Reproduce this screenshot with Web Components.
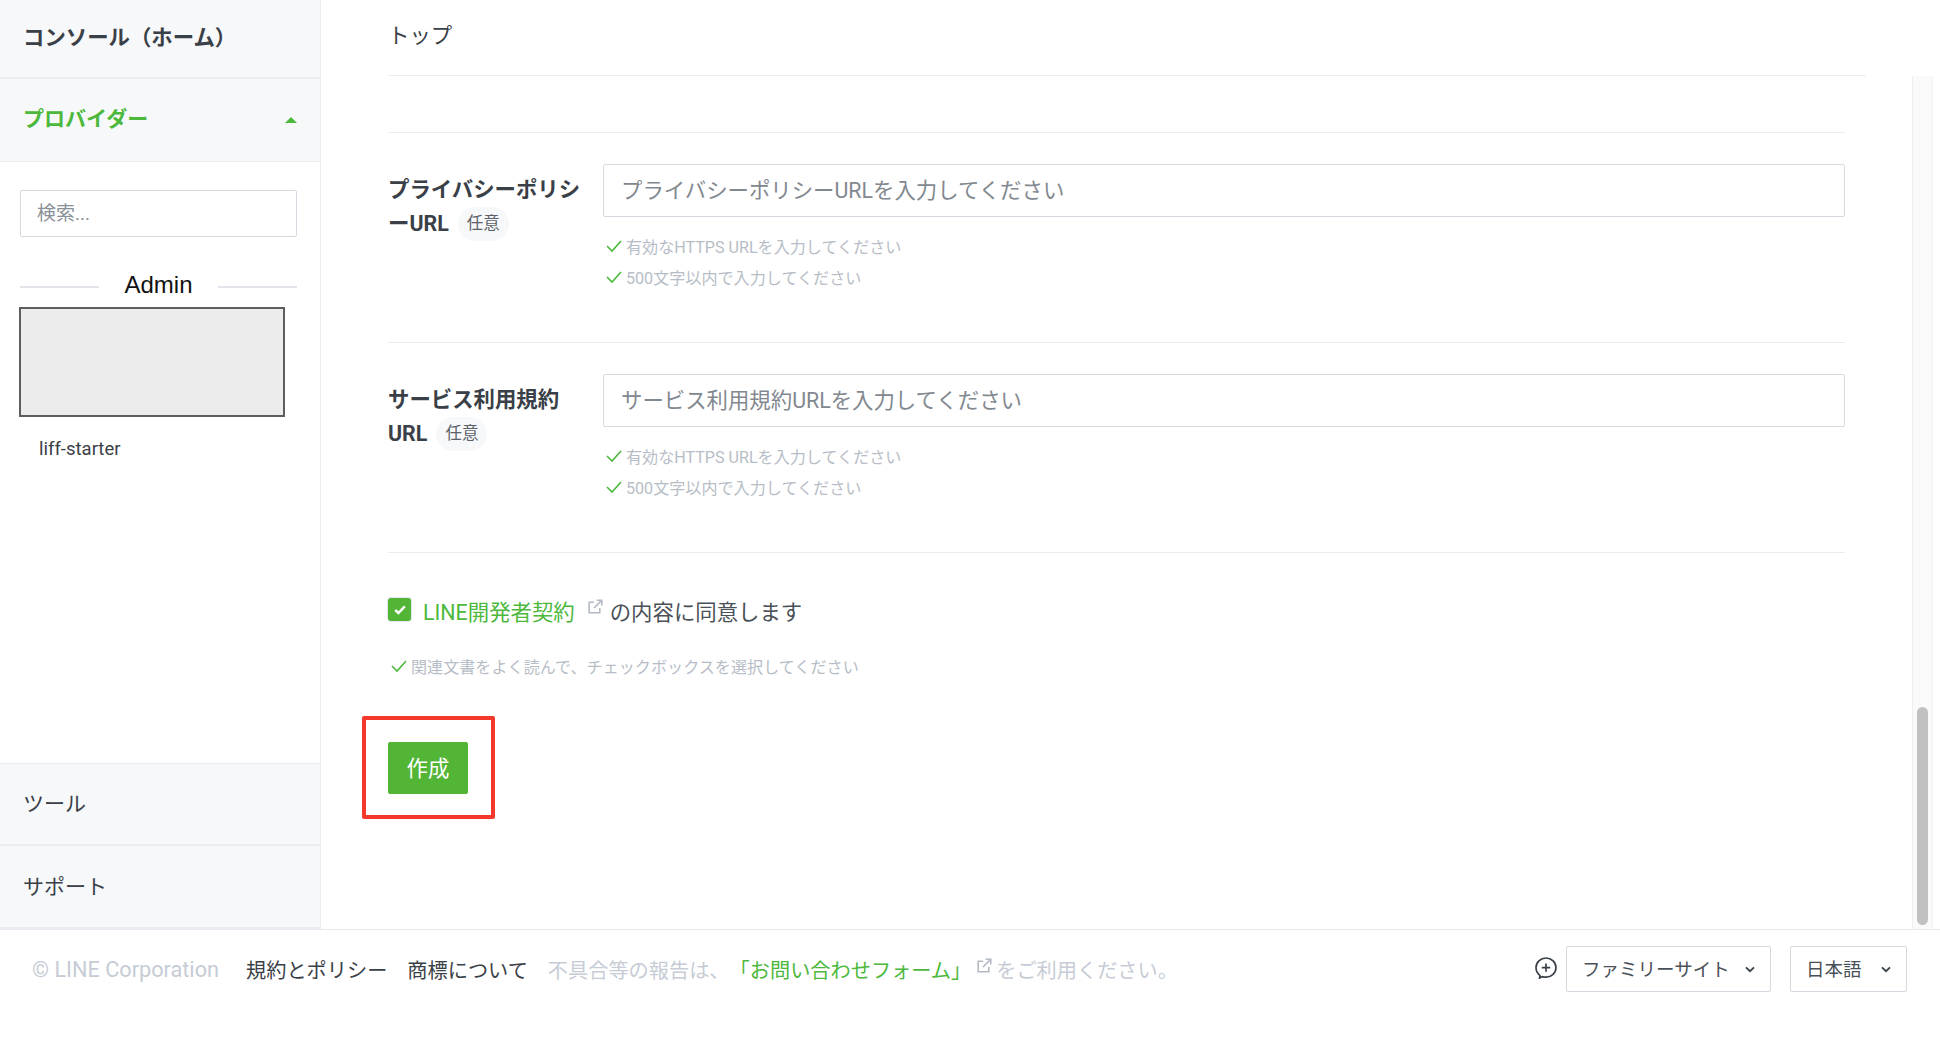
<!DOCTYPE html>
<html lang="ja">
<head>
<meta charset="utf-8">
<title>LINE Developers</title>
<style>
    html, body{
        margin: 0;
        height: 100%;
        background: #FFFFFF;
        overflow: hidden;
    }
    body{
        font-family: "Roboto", "Noto Sans CJK JP", sans-serif;
        color: #3A4047;
    }
</style>
</head>
<body>
<console-app>
    <side-nav slot="side"></side-nav>
    <page-top slot="top">トップ</page-top>
    <url-field slot="form" placeholder="プライバシーポリシーURLを入力してください">プライバシーポリシ<br>ーURL</url-field>
    <url-field slot="form" placeholder="サービス利用規約URLを入力してください">サービス利用規約<br>URL</url-field>
    <agree-box slot="form"></agree-box>
    <create-button slot="form">作成</create-button>
    <site-footer slot="foot"></site-footer>
</console-app>

<script>
const EXTERNAL_ICON = `
    <svg class="ext" viewBox="0 0 16 16" fill="none" stroke="currentColor" stroke-width="1.6">
        <path d="M7 3.2H2.2v10.6h10.6V9"/>
        <path d="M9.6 1.2h5.2v5.2M14.6 1.4L7 9"/>
    </svg>`;

const CHEVRON_ICON = `
    <svg class="chevron" viewBox="0 0 10 7" fill="none" stroke="currentColor" stroke-width="1.8">
        <path d="M1 1.4l4 3.8 4-3.8"/>
    </svg>`;

class ConsoleApp extends HTMLElement
{
    constructor()
    {
        super();
        this.attachShadow({mode: "open"});
    }

    getStyles()
    {
        return `
        <style>
            :host{
                display: grid;
                grid-template-rows: 929px 113px;
                height: 1042px;
            }
            .body{
                display: flex;
                min-height: 0;
            }
            .main{
                flex: 1;
                display: flex;
                flex-direction: column;
                padding: 0 46px 0 67px;
                min-width: 0;
            }
            .form{
                display: flex;
                flex-direction: column;
                padding-right: 21px;
            }
            .rail{
                width: 21px;
                margin-top: 76px;
                margin-right: 7px;
                box-sizing: border-box;
                border-left: 1px solid #ECEEF2;
                border-right: 1px solid #F2F3F5;
                background: #FAFAFA;
                display: flex;
                flex-direction: column;
                align-items: center;
            }
            .thumb{
                width: 11px;
                height: 218px;
                margin-top: auto;
                margin-bottom: 4px;
                border-radius: 6px;
                background: #C1C1C1;
            }
            footer{
                border-top: 1px solid #E6E9EF;
            }
        </style>
        `;
    }

    render()
    {
        this.shadowRoot.innerHTML = `
            ${this.getStyles()}
            <div class="body">
                <slot name="side"></slot>
                <div class="main">
                    <slot name="top"></slot>
                    <div class="form"><slot name="form"></slot></div>
                </div>
                <div class="rail"><div class="thumb"></div></div>
            </div>
            <footer><slot name="foot"></slot></footer>
        `;
    }

    connectedCallback()
    {
        this.render();
    }
}
customElements.define("console-app", ConsoleApp);

class NavItem extends HTMLElement
{
    constructor()
    {
        super();
        this.attachShadow({mode: "open"});
    }

    render()
    {
        this.shadowRoot.innerHTML = `
            <style>
                :host{
                    display: flex;
                    align-items: center;
                    justify-content: space-between;
                    box-sizing: border-box;
                    height: 83px;
                    padding: 0 23px 4px;
                    background: #F7F8FA;
                    border-bottom: 2px solid #E9ECF1;
                    font-size: 21px;
                    color: #3A4047;
                }
                :host([bold]){
                    font-weight: 700;
                    padding-bottom: 7px;
                }
                :host([active]){
                    color: #4CB83C;
                    border-bottom-width: 1px;
                }
                .caret{
                    width: 0;
                    height: 0;
                    margin-top: 7px;
                    border-left: 6px solid transparent;
                    border-right: 6px solid transparent;
                    border-bottom: 6px solid #4CB83C;
                }
            </style>
            <slot></slot>
            ${this.hasAttribute("active") ? '<span class="caret"></span>' : ""}
        `;
    }

    connectedCallback()
    {
        this.render();
    }
}
customElements.define("nav-item", NavItem);

class SideNav extends HTMLElement
{
    constructor()
    {
        super();
        this.attachShadow({mode: "open"});
    }

    render()
    {
        this.shadowRoot.innerHTML = `
            <style>
                :host{
                    display: flex;
                    flex-direction: column;
                    flex: none;
                    box-sizing: border-box;
                    width: 321px;
                    border-right: 1px solid #E9ECF1;
                }
                .home{
                    height: 79px;
                    font-size: 21.4px;
                }
                .panel{
                    flex: 1;
                    padding: 28px 23px 0 20px;
                }
                .search{
                    box-sizing: border-box;
                    height: 47px;
                    padding: 0 16px 4px;
                    display: flex;
                    align-items: center;
                    border: 1px solid #D5D9E0;
                    border-radius: 2px;
                    font-size: 19px;
                    color: #8A9098;
                }
                .group{
                    display: flex;
                    align-items: center;
                    justify-content: space-between;
                    height: 30px;
                    margin-top: 33px;
                    font-family: "Liberation Sans", sans-serif;
                    font-size: 24px;
                    color: #111111;
                }
                .group::before, .group::after{
                    content: "";
                    width: 79px;
                    height: 2px;
                    margin-top: 4px;
                    background: #E2E5EA;
                }
                .thumb{
                    box-sizing: border-box;
                    width: 266px;
                    height: 110px;
                    margin: 7px 0 20px -1px;
                    border: 2px solid #5E5E5E;
                    background: #ECECEC;
                }
                .name{
                    padding-left: 19px;
                    font-size: 18.5px;
                    line-height: 24px;
                    color: #3A4047;
                }
                nav-item.first{
                    border-top: 1px solid #E9ECF1;
                }
            </style>
            <nav-item class="home" bold>コンソール（ホーム）</nav-item>
            <nav-item active bold>プロバイダー</nav-item>
            <div class="panel">
                <div class="search">検索...</div>
                <div class="group"><span>Admin</span></div>
                <div class="thumb"></div>
                <div class="name">liff-starter</div>
            </div>
            <nav-item class="first">ツール</nav-item>
            <nav-item>サポート</nav-item>
        `;
    }

    connectedCallback()
    {
        this.render();
    }
}
customElements.define("side-nav", SideNav);

class PageTop extends HTMLElement
{
    constructor()
    {
        super();
        this.attachShadow({mode: "open"});
    }

    render()
    {
        this.shadowRoot.innerHTML = `
            <style>
                :host{
                    display: flex;
                    align-items: center;
                    box-sizing: border-box;
                    height: 76px;
                    padding-bottom: 9px;
                    border-bottom: 1px solid #E9ECF1;
                    font-size: 21.4px;
                    color: #3A4047;
                    margin-bottom: 56px;
                }
            </style>
            <slot></slot>
        `;
    }

    connectedCallback()
    {
        this.render();
    }
}
customElements.define("page-top", PageTop);

class HintLine extends HTMLElement
{
    constructor()
    {
        super();
        this.attachShadow({mode: "open"});
    }

    render()
    {
        this.shadowRoot.innerHTML = `
            <style>
                :host{
                    display: flex;
                    align-items: center;
                    gap: 4px;
                    height: 31px;
                    padding-left: 3px;
                    font-size: 16.1px;
                    color: #B7BDC6;
                }
                svg{
                    width: 16px;
                    height: 14px;
                    flex: none;
                }
            </style>
            <svg viewBox="0 0 16 14" fill="none" stroke="#4CB83C" stroke-width="1.6">
                <path d="M1 7l5 5 9-10"/>
            </svg>
            <slot></slot>
        `;
    }

    connectedCallback()
    {
        this.render();
    }
}
customElements.define("hint-line", HintLine);

class UrlField extends HTMLElement
{
    constructor()
    {
        super();
        this.attachShadow({mode: "open"});
    }

    render()
    {
        this.shadowRoot.innerHTML = `
            <style>
                :host{
                    display: grid;
                    grid-template-columns: 215px 1fr;
                    box-sizing: border-box;
                    height: 210px;
                    padding-top: 31px;
                    border-top: 1px solid #E9ECF1;
                }
                .label{
                    margin-top: 9px;
                    font-size: 21.4px;
                    line-height: 34px;
                    font-weight: 700;
                    color: #3A4047;
                }
                .tag{
                    display: inline-block;
                    box-sizing: border-box;
                    height: 34px;
                    padding: 0 9px;
                    margin-left: 9px;
                    border-radius: 17px;
                    background: #F7F8FA;
                    font-size: 16.5px;
                    line-height: 33px;
                    font-weight: 400;
                    vertical-align: top;
                    color: #5B6168;
                }
                .input{
                    box-sizing: border-box;
                    height: 53px;
                    padding: 0 17px 5px;
                    display: flex;
                    align-items: center;
                    border: 1px solid #D5D9E0;
                    border-radius: 2px;
                    font-size: 21.4px;
                    color: #82888F;
                }
                .hints{
                    margin-top: 13px;
                }
            </style>
            <div class="label"><slot></slot><span class="tag">任意</span></div>
            <div>
                <div class="input">${this.getAttribute("placeholder")}</div>
                <div class="hints">
                    <hint-line>有効なHTTPS URLを入力してください</hint-line>
                    <hint-line>500文字以内で入力してください</hint-line>
                </div>
            </div>
        `;
    }

    connectedCallback()
    {
        this.render();
    }
}
customElements.define("url-field", UrlField);

class AgreeBox extends HTMLElement
{
    constructor()
    {
        super();
        this.attachShadow({mode: "open"});
    }

    render()
    {
        this.shadowRoot.innerHTML = `
            <style>
                :host{
                    display: block;
                    box-sizing: border-box;
                    height: 190px;
                    padding-top: 42px;
                    border-top: 1px solid #E9ECF1;
                }
                .row{
                    display: flex;
                    align-items: center;
                    height: 30px;
                    font-size: 21.4px;
                    color: #4A5057;
                }
                .box{
                    box-sizing: border-box;
                    width: 23px;
                    height: 23px;
                    margin: -1px 12px 0 0;
                    border-radius: 3px;
                    background: #53B535;
                    box-shadow: 0 0 0 1px #E4E8EE;
                    display: flex;
                    align-items: center;
                    justify-content: center;
                }
                .box svg{
                    width: 12px;
                    height: 10px;
                }
                a{
                    color: #4CB83C;
                    text-decoration: none;
                }
                .ext{
                    width: 16px;
                    height: 16px;
                    margin: -6px 7px 0 12px;
                    color: #B4BAC3;
                }
                hint-line{
                    margin-top: 25px;
                    padding-left: 3px;
                }
            </style>
            <div class="row">
                <span class="box">
                    <svg viewBox="0 0 12 10" fill="none" stroke="#FFFFFF" stroke-width="2.4"><path d="M1.2 5l3.2 3L10.8 1.4"/></svg>
                </span>
                <a>LINE開発者契約</a>${EXTERNAL_ICON}<span>の内容に同意します</span>
            </div>
            <hint-line>関連文書をよく読んで、チェックボックスを選択してください</hint-line>
        `;
    }

    connectedCallback()
    {
        this.render();
    }
}
customElements.define("agree-box", AgreeBox);

class CreateButton extends HTMLElement
{
    constructor()
    {
        super();
        this.attachShadow({mode: "open"});
    }

    render()
    {
        this.shadowRoot.innerHTML = `
            <style>
                :host{
                    display: flex;
                    align-items: center;
                    justify-content: center;
                    position: relative;
                    box-sizing: border-box;
                    width: 80px;
                    height: 52px;
                    padding-bottom: 4px;
                    border-radius: 2px;
                    background: #53B535;
                    color: #FFFFFF;
                    font-size: 21.4px;
                }
                .mark{
                    position: absolute;
                    left: -26px;
                    top: -26px;
                    width: 133px;
                    height: 103px;
                    box-sizing: border-box;
                    border: 4px solid #F5382C;
                    border-radius: 2px;
                }
            </style>
            <slot></slot>
            <span class="mark"></span>
        `;
    }

    connectedCallback()
    {
        this.render();
    }
}
customElements.define("create-button", CreateButton);

class FootSelect extends HTMLElement
{
    constructor()
    {
        super();
        this.attachShadow({mode: "open"});
    }

    render()
    {
        this.shadowRoot.innerHTML = `
            <style>
                :host{
                    display: flex;
                    align-items: center;
                    justify-content: space-between;
                    box-sizing: border-box;
                    height: 46px;
                    padding: 0 15px 2px 15px;
                    border: 1px solid #D5D9E0;
                    border-radius: 2px;
                    font-size: 18.5px;
                    color: #4A5057;
                }
                .chevron{
                    width: 10px;
                    height: 7px;
                    margin-top: 2px;
                    color: #3A4047;
                }
            </style>
            <slot></slot>${CHEVRON_ICON}
        `;
    }

    connectedCallback()
    {
        this.render();
    }
}
customElements.define("foot-select", FootSelect);

class SiteFooter extends HTMLElement
{
    constructor()
    {
        super();
        this.attachShadow({mode: "open"});
    }

    render()
    {
        this.shadowRoot.innerHTML = `
            <style>
                :host{
                    display: flex;
                    align-items: center;
                    height: 46px;
                    padding: 16px 33px 0 32px;
                    font-size: 20.2px;
                    color: #C6CCD5;
                }
                .copy{
                    font-size: 21.7px;
                }
                .dark{
                    color: #3A4047;
                }
                a{
                    color: #4CB83C;
                    text-decoration: none;
                }
                .ext{
                    width: 16px;
                    height: 16px;
                    margin: -6px 4px 0 5px;
                    color: #B4BAC3;
                }
                .chat{
                    width: 22px;
                    height: 23px;
                    margin: -4px 9px 0 auto;
                }
                .family{
                    width: 205px;
                    margin-right: 19px;
                }
                .lang{
                    width: 117px;
                }
            </style>
            <span class="copy">© LINE Corporation</span>
            <span class="dark" style="margin-left:27px">規約とポリシー</span>
            <span class="dark" style="margin-left:20px">商標について</span>
            <span style="margin-left:20px">不具合等の報告は、</span>
            <a>「お問い合わせフォーム」</a>${EXTERNAL_ICON}
            <span>をご利用ください。</span>
            <svg class="chat" viewBox="0 0 22 23" fill="none" stroke="#3A4047" stroke-width="1.7">
                <path d="M5 19.6C2.6 17.8 1 15 1 11.6 1 6.2 5.4 2 11 2s10 4.2 10 9.6-4.4 9.6-10 9.6c-1.3 0-2.5-.2-3.6-.6L4.6 22z"/>
                <path d="M11 7.4v8.4M6.8 11.6h8.4"/>
            </svg>
            <foot-select class="family">ファミリーサイト</foot-select>
            <foot-select class="lang">日本語</foot-select>
        `;
    }

    connectedCallback()
    {
        this.render();
    }
}
customElements.define("site-footer", SiteFooter);
</script>
</body>
</html>
